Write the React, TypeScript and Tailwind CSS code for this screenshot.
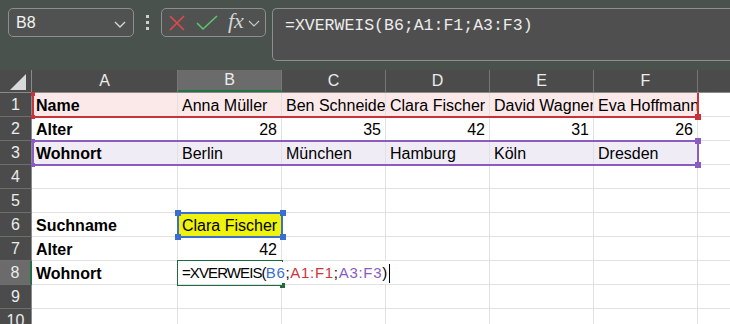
import React from 'react';

type Cell = { text?: React.ReactNode; bold?: boolean; right?: boolean; bg?: string };

const cols = ['A', 'B', 'C', 'D', 'E', 'F'];
const colW = ['w-[146px]', 'w-[104px]', 'w-[104px]', 'w-[104px]', 'w-[104px]', 'w-[104px]'];

const names = ['Anna Müller', 'Ben Schneider', 'Clara Fischer', 'David Wagner', 'Eva Hoffmann'];
const ages = ['28', '35', '42', '31', '26'];
const cities = ['Berlin', 'München', 'Hamburg', 'Köln', 'Dresden'];

const Formula = () => (
  <span className="text-[15px] whitespace-nowrap flex items-center">
    <span className="text-black tracking-[-0.9px]">=XVERWEIS(</span>
    <span className="flex tracking-[0.7px]">
      <span className="text-[#3a6fd0]">B6</span>
      <span className="text-black">;</span>
      <span className="text-[#d0343d]">A1:F1</span>
      <span className="text-black">;</span>
      <span className="text-[#8a5cc2]">A3:F3</span>
      <span className="text-black">)</span>
    </span>
    <span className="ml-[1px] h-[19px] border-l border-black" />
  </span>
);

const rows: Cell[][] = [
  [{ text: 'Name', bold: true, bg: 'bg-[#fbe9ea]' }, ...names.map(n => ({ text: n, bg: 'bg-[#fbe9ea]' }))],
  [{ text: 'Alter', bold: true }, ...ages.map(a => ({ text: a, right: true }))],
  [{ text: 'Wohnort', bold: true, bg: 'bg-[#f0ecf6]' }, ...cities.map(c => ({ text: c, bg: 'bg-[#f0ecf6]' }))],
  [],
  [],
  [{ text: 'Suchname', bold: true }, { text: 'Clara Fischer', bg: 'bg-[#eef20c]' }],
  [{ text: 'Alter', bold: true }, { text: '42', right: true }],
  [{ text: 'Wohnort', bold: true }, { text: <Formula /> }],
  [],
  [],
];

const Handle = ({ className }: { className: string }) => (
  <div className={`absolute w-[6px] h-[6px] ${className}`} />
);

export default function App() {
  return (
    <div className="w-[730px] h-[324px] overflow-hidden bg-white font-['Liberation_Sans',Arial,sans-serif]">
      {/* Toolbar */}
      <div className="h-[70px] bg-[#4a524d] flex items-start pl-2 pt-2">
        <div className="w-[126px] h-[29px] rounded-[5px] border border-[#8d8f8e] bg-[#505251] flex items-center justify-between pl-[7px] pr-[6px]">
          <span className="text-[16px] text-[#f2f2f2]">B8</span>
          <svg width="14" height="10" viewBox="0 0 14 10" className="mt-[2px]">
            <polyline points="2,3 7,8 12,3" fill="none" stroke="#d8d8d8" strokeWidth="1.3" />
          </svg>
        </div>
        <div className="w-[27px] h-[29px] flex flex-col items-center justify-center gap-[3px]">
          <span className="w-[3px] h-[3px] bg-[#cfcfcf]" />
          <span className="w-[3px] h-[3px] bg-[#cfcfcf]" />
          <span className="w-[3px] h-[3px] bg-[#cfcfcf]" />
        </div>
        <div className="w-[105px] h-[29px] rounded-[5px] border border-[#8d8f8e] bg-[#505251] flex items-center pl-[6px]">
          <svg width="18" height="18" viewBox="0 0 18 18">
            <path d="M2 2 L16 16 M16 2 L2 16" stroke="#e5474f" strokeWidth="1.6" fill="none" />
          </svg>
          <svg width="22" height="18" viewBox="0 0 22 18" className="ml-[10px]">
            <polyline points="1,9 7,15 21,2" stroke="#5fc46e" strokeWidth="1.6" fill="none" />
          </svg>
          <span className="ml-[10px] text-[22px] italic text-[#d4d4d4] font-['Liberation_Serif',serif] leading-none mb-[3px]">fx</span>
          <svg width="12" height="10" viewBox="0 0 12 10" className="ml-[4px]">
            <polyline points="1,3 6,8 11,3" fill="none" stroke="#c8c8c8" strokeWidth="1.2" />
          </svg>
        </div>
        <div className="ml-[6px] flex-1 h-[53px] rounded-l-[5px] border border-r-0 border-[#8d8f8e] bg-[#4f4f4f] pl-3 pt-[4px]">
          <span className="font-['Liberation_Mono',monospace] text-[16.5px] leading-[22px] text-[#ececec]">=XVERWEIS(B6;A1:F1;A3:F3)</span>
        </div>
      </div>

      {/* Grid */}
      <div className="relative">
        <div className="flex h-[23px] bg-[#4b4b4b] border-b border-[#8a8a8a]">
          <div className="w-[32px] border-r border-[#8a8a8a] relative">
            <svg width="18" height="17" viewBox="0 0 18 17" className="absolute right-[3px] bottom-[1px]">
              <polygon points="0,16 16,0 16,16" fill="#d9d9d9" />
            </svg>
          </div>
          {cols.map((c, i) => (
            <div
              key={c}
              className={`${colW[i]} flex items-center justify-center text-[16px] text-[#ececec] border-r border-[#767676] ${
                c === 'B' ? 'bg-[#6b6b6b] border-b-2 border-b-[#217346]' : ''
              }`}
            >
              {c}
            </div>
          ))}
          <div className="flex-1" />
        </div>

        {rows.map((r, ri) => {
          const n = ri + 1;
          return (
            <div key={n} className="flex h-[24px]">
              <div
                className={`w-[32px] flex items-center justify-center pt-[1px] text-[16px] text-[#ececec] border-b border-[#6e6e6e] ${
                  n === 8 ? 'bg-[#6b6b6b] border-r-2 border-r-[#217346]' : 'bg-[#4b4b4b] border-r border-r-[#8a8a8a]'
                }`}
              >
                {n}
              </div>
              {cols.map((c, ci) => {
                const cell = r[ci] || {};
                const overflow = n === 8 && ci === 1;
                const hideRight = n === 8 && (ci === 1 || ci === 2);
                return (
                  <div
                    key={c}
                    className={`${colW[ci]} flex items-center px-1 pt-[2px] text-[16px] text-black border-b border-[#e1e1e1] ${
                      hideRight ? '' : 'border-r border-r-[#e1e1e1]'
                    } ${cell.bg || 'bg-white'} ${cell.right ? 'justify-end' : ''} ${
                      overflow ? 'relative z-30 overflow-visible' : 'overflow-hidden whitespace-nowrap'
                    } ${cell.bold ? 'font-bold' : ''}`}
                  >
                    {cell.text}
                  </div>
                );
              })}
              <div className="flex-1 border-b border-[#e1e1e1]" />
            </div>
          );
        })}

        {/* Range highlight: A1:F1 */}
        <div className="absolute left-[32px] top-[23px] w-[667px] h-[25px] border-l-2 border-r-2 border-b-2 border-[#c8323b] z-20" />
        <Handle className="left-[31px] top-[22px] !w-[4px] !h-[4px] bg-[#c8323b] z-20" />
        <Handle className="left-[31px] top-[45px] !w-[4px] !h-[4px] bg-[#c8323b] z-20" />
        <Handle className="left-[695px] top-[44px] bg-[#c8323b] z-20" />

        {/* Range highlight: A3:F3 */}
        <div className="absolute left-[32px] top-[70px] w-[667px] h-[26px] border-2 border-[#8a5cc2] z-20" />
        <Handle className="left-[31px] top-[69px] !w-[4px] !h-[4px] bg-[#8a5cc2] z-20" />
        <Handle className="left-[31px] top-[93px] !w-[4px] !h-[4px] bg-[#8a5cc2] z-20" />
        <Handle className="left-[695px] top-[68px] bg-[#8a5cc2] z-20" />
        <Handle className="left-[695px] top-[92px] bg-[#8a5cc2] z-20" />

        {/* Reference: B6 */}
        <div className="absolute left-[177px] top-[142px] w-[106px] h-[26px] border-2 border-[#3a6fd0] z-20" />
        <Handle className="left-[175px] top-[140px] bg-[#3a6fd0] z-20" />
        <Handle className="left-[280px] top-[140px] bg-[#3a6fd0] z-20" />
        <Handle className="left-[175px] top-[164px] bg-[#3a6fd0] z-20" />
        <Handle className="left-[280px] top-[164px] bg-[#3a6fd0] z-20" />

        {/* Active cell: B8 (editing, right edge hidden by text) */}
        <div className="absolute left-[177px] top-[190px] w-[106px] h-[26px] border-2 border-r-0 border-[#1f6b3f] z-20" />
        <Handle className="left-[280px] top-[213px] !w-[5px] !h-[5px] bg-[#1f6b3f] z-20" />
      </div>
    </div>
  );
}
